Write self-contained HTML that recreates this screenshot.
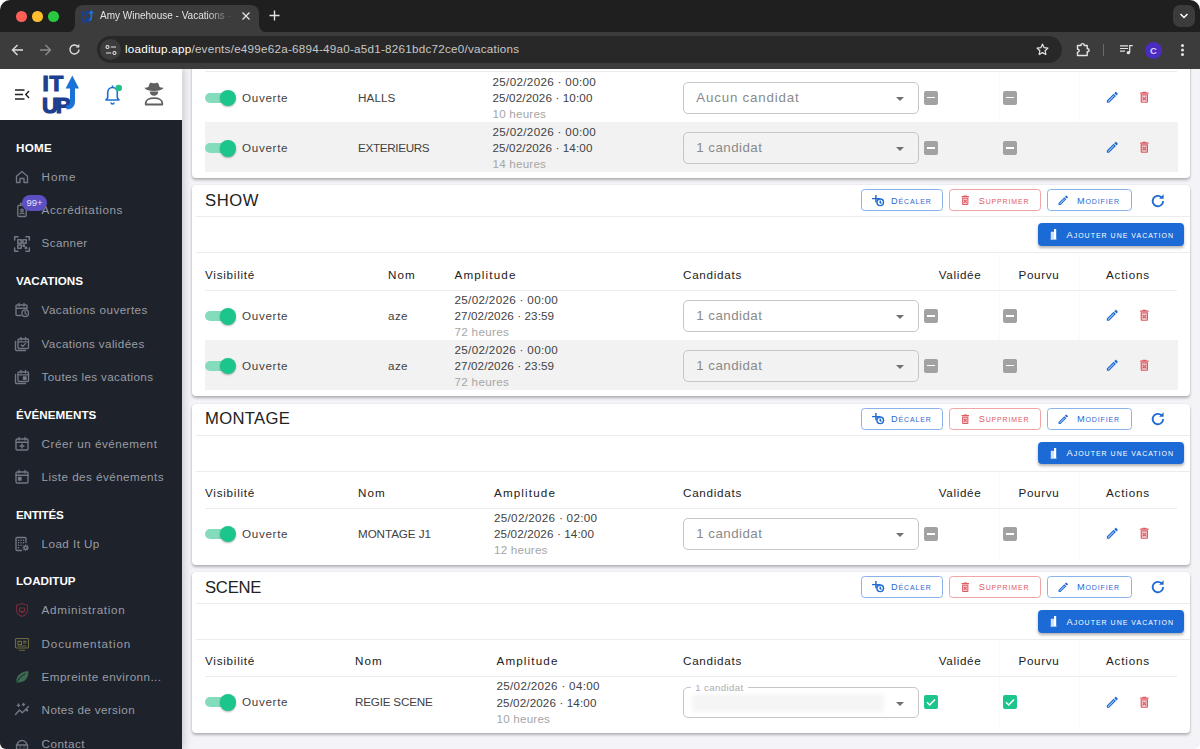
<!DOCTYPE html>
<html lang="fr">
<head>
<meta charset="utf-8">
<title>Amy Winehouse - Vacations</title>
<style>
*{box-sizing:border-box;margin:0;padding:0}
html,body{width:1200px;height:749px;overflow:hidden;background:#fff}
body{font-family:"Liberation Sans",sans-serif;position:relative;color:#333}
.abs{position:absolute}
#win{position:absolute;left:0;top:0;width:1200px;height:749px;border-radius:10px 10px 6px 6px;overflow:hidden;background:#f3f3f8}
/* ---------- browser chrome ---------- */
#tabbar{position:absolute;left:0;top:0;width:1200px;height:33px;background:#1f1f1f}
#toolbar{position:absolute;left:0;top:32px;width:1200px;height:36.50px;background:#3c3c3c}
.tl{position:absolute;top:11px;width:10.50px;height:10.50px;border-radius:50%}
#tab{position:absolute;left:75px;top:5px;width:184px;height:28px;background:#3c3c3c;border-radius:8px 8px 0 0}
#tab:before,#tab:after{content:"";position:absolute;bottom:0;width:8px;height:8px;background:radial-gradient(circle at 0 0,transparent 7.5px,#3c3c3c 8px)}
#tab:before{left:-8px}
#tab:after{right:-8px;background:radial-gradient(circle at 100% 0,transparent 7.5px,#3c3c3c 8px)}
#tabtitle{position:absolute;left:25px;top:4px;font-size:10px;line-height:14px;color:#e3e3e3;white-space:nowrap;width:133px;overflow:hidden;
 -webkit-mask-image:linear-gradient(90deg,#000 80%,transparent 100%);mask-image:linear-gradient(90deg,#000 80%,transparent 100%)}
#urlpill{position:absolute;left:97px;top:4px;width:965px;height:27px;border-radius:14px;background:#282828}
#urlicon{position:absolute;left:3px;top:3px;width:21px;height:21px;border-radius:50%;background:#3c3c3c}
#url{position:absolute;left:28px;top:6px;font-size:11.67px;line-height:14px;color:#c7c7c7;white-space:nowrap;letter-spacing:.24px}
#url b{font-weight:normal;color:#fff}
/* ---------- sidebar ---------- */
#side{position:absolute;left:0;top:68px;width:182px;height:681px;background:#1e222b;box-shadow:2px 0 8px rgba(0,0,0,.18)}
#sidehead{position:absolute;left:0;top:0;width:182px;height:52px;background:#fff}
.sh{position:absolute;left:16px;font-size:11.67px;font-weight:bold;color:#fff;white-space:nowrap;line-height:16px}
.si{position:absolute;left:41.6px;font-size:11.67px;color:#999da5;white-space:nowrap;line-height:16px;letter-spacing:.5px}
.logo{font-size:22.50px;font-weight:bold;color:#1d3f8f;line-height:24px;-webkit-text-stroke:1.20px #1d3f8f}
.ic{position:absolute;left:14px;width:16px;height:16px}
/* ---------- main ---------- */
.card{position:absolute;left:192px;width:998px;background:#fff;border-radius:4px;box-shadow:0 2px 3px rgba(0,0,0,.27),0 0 1.50px rgba(0,0,0,.1)}
.ctitle{position:absolute;left:13px;top:7px;font-size:16.67px;color:#222;line-height:18px;white-space:nowrap;letter-spacing:.3px}
.hl{position:absolute;height:1px;background:#ececec}

.t{font-size:11.67px;line-height:16px;color:#424242;white-space:nowrap;letter-spacing:.15px}
.t.ouv{letter-spacing:.68px}
.t.d{letter-spacing:.34px}
.t.dur{color:#a6a6a6;letter-spacing:.5px}
.t.th{color:#222;letter-spacing:.8px}
.knob{width:16.50px;height:16.50px;border-radius:50%;background:#1bc58b;box-shadow:0 1px 2px rgba(0,0,0,.3)}
.cb{width:14px;height:14px;border-radius:2px;background:#a2a2a2}
.cb i{position:absolute;left:3px;top:6.10px;width:8px;height:1.80px;background:#fff}
.sel{width:235.50px;height:31.50px;border:1px solid #c6c6c6;border-radius:5px}
.sel .sv{position:absolute;left:12px;top:6.80px;font-size:13.33px;line-height:16px;color:#8a8a8a;letter-spacing:.45px;white-space:nowrap}
.sel .fl{position:absolute;left:7px;top:-5.70px;padding:0 4px;font-size:9.70px;line-height:12px;color:#adadad;letter-spacing:.35px;white-space:nowrap}
.sel .blur{position:absolute;left:8px;top:6px;width:192px;height:18px;background:#f5f5f5;filter:blur(2px);border-radius:3px}
.caret{position:absolute;right:13.70px;top:14px;border-left:4px solid transparent;border-right:4px solid transparent;border-top:4.50px solid #707070}
.btn{height:22px;border:1px solid;border-radius:3.50px;font-size:9.20px;white-space:nowrap}
.btn span{position:absolute;top:3.50px;line-height:14px;letter-spacing:.85px}
.btn small{font-size:7px;letter-spacing:.85px}
.btn.add span,.btn.add small{letter-spacing:1px}
.btn.add{background:#1b6ad6;border-color:#1b6ad6;color:#fff;box-shadow:0 2px 3px rgba(0,0,0,.3)}
</style>
</head>
<body>
<div id="win">

<!-- main content -->
<div id="main">
<div class="card" style="top:20px;height:157.80px"></div>
<div class="hl" style="left:205px;top:70.50px;width:972px;background:#ececec"></div>
<div class="abs" style="left:999px;top:68px;width:1px;height:103.5px;background:rgba(0,0,0,.018)"></div><div class="abs" style="left:1079px;top:68px;width:1px;height:103.5px;background:rgba(0,0,0,.018)"></div>
<div class="abs" style="left:205px;top:92.7px;width:25px;height:10px;border-radius:5px;background:#84dcbc"></div><div class="abs knob" style="left:219.5px;top:89.7px"></div>
<div class="abs t ouv" style="left:242px;top:89.5px;">Ouverte</div>
<div class="abs t" style="left:358px;top:89.5px;letter-spacing:0.1px">HALLS</div>
<div class="abs t d" style="left:492.5px;top:73.8px;letter-spacing:0.32px">25/02/2026 · 00:00</div>
<div class="abs t d" style="left:492.5px;top:89.9px;letter-spacing:0.12px">25/02/2026 · 10:00</div>
<div class="abs t dur" style="left:492.5px;top:105.9px;letter-spacing:0.2px">10 heures</div>
<div class="abs sel" style="left:683.3px;top:82.0px;background:#fff"><span class="sv" style="letter-spacing:0.8px">Aucun candidat</span><i class="caret"></i></div>
<div class="abs cb" style="left:924px;top:90.5px"><i></i></div>
<div class="abs cb" style="left:1003px;top:90.5px"><i></i></div>
<svg class="abs" style="left:1104.85px;top:90.15px" width="14.7" height="14.7" viewBox="0 0 24 24" fill="#1f6bd3"><path opacity=".38" d="M5 18.080V19h.920l9.060-9.060-.920-.920z"/><path d="M20.710 7.040c.390-.390.390-1.020 0-1.410l-2.340-2.340c-.2-.2-.450-.290-.710-.290s-.510.100-.700.290l-1.830 1.830 3.750 3.750 1.830-1.830zM3 17.250V21h3.750L17.810 9.940l-3.750-3.750L3 17.250zM5.920 19H5v-.920l9.060-9.060.920.920L5.920 19z"/></svg>
<svg class="abs" style="left:1136.95px;top:90.15px" width="14.7" height="14.7" viewBox="0 0 24 24" fill="#dd5a62"><path opacity=".32" d="M16 9H8v10h8V9zm-.470 7.120l-1.410 1.410L12 15.410l-2.120 2.120-1.410-1.410L10.590 14l-2.130-2.120 1.410-1.410L12 12.590l2.120-2.120 1.410 1.410L13.410 14l2.120 2.120z"/><path d="M14.120 10.470L12 12.590l-2.130-2.120-1.410 1.410L10.590 14l-2.120 2.120 1.410 1.410L12 15.410l2.120 2.120 1.410-1.410L13.410 14l2.120-2.120zM15.500 4l-1-1h-5l-1 1H5v2h14V4zM6 19c0 1.100.9 2 2 2h8c1.100 0 2-.9 2-2V7H6v12zM8 9h8v10H8V9z"/></svg>
<div class="abs" style="left:205px;top:121.7px;width:972.50px;height:50.3px;background:#f2f2f2"></div>
<div class="abs" style="left:205px;top:143.0px;width:25px;height:10px;border-radius:5px;background:#84dcbc"></div><div class="abs knob" style="left:219.5px;top:140.0px"></div>
<div class="abs t ouv" style="left:242px;top:139.8px;">Ouverte</div>
<div class="abs t" style="left:358px;top:139.8px;letter-spacing:-0.32px">EXTERIEURS</div>
<div class="abs t d" style="left:492.5px;top:124.10px;letter-spacing:0.32px">25/02/2026 · 00:00</div>
<div class="abs t d" style="left:492.5px;top:140.20px;letter-spacing:0.12px">25/02/2026 · 14:00</div>
<div class="abs t dur" style="left:492.5px;top:156.20px;letter-spacing:0.2px">14 heures</div>
<div class="abs sel" style="left:683.3px;top:132.3px;background:#f2f2f2"><span class="sv" style="letter-spacing:0.45px">1 candidat</span><i class="caret"></i></div>
<div class="abs cb" style="left:924px;top:140.8px"><i></i></div>
<div class="abs cb" style="left:1003px;top:140.8px"><i></i></div>
<svg class="abs" style="left:1104.85px;top:140.45px" width="14.7" height="14.7" viewBox="0 0 24 24" fill="#1f6bd3"><path opacity=".38" d="M5 18.080V19h.920l9.060-9.060-.920-.920z"/><path d="M20.710 7.040c.390-.390.390-1.020 0-1.410l-2.340-2.340c-.2-.2-.450-.290-.710-.290s-.510.100-.700.290l-1.830 1.830 3.750 3.750 1.830-1.830zM3 17.250V21h3.750L17.810 9.940l-3.750-3.750L3 17.250zM5.920 19H5v-.920l9.060-9.060.920.920L5.920 19z"/></svg>
<svg class="abs" style="left:1136.95px;top:140.45px" width="14.7" height="14.7" viewBox="0 0 24 24" fill="#dd5a62"><path opacity=".32" d="M16 9H8v10h8V9zm-.470 7.120l-1.410 1.410L12 15.410l-2.120 2.120-1.410-1.410L10.590 14l-2.130-2.120 1.410-1.410L12 12.590l2.120-2.120 1.410 1.410L13.410 14l2.120 2.120z"/><path d="M14.120 10.470L12 12.590l-2.130-2.120-1.410 1.410L10.590 14l-2.120 2.120 1.410 1.410L12 15.410l2.120 2.120 1.410-1.410L13.410 14l2.120-2.120zM15.500 4l-1-1h-5l-1 1H5v2h14V4zM6 19c0 1.100.9 2 2 2h8c1.100 0 2-.9 2-2V7H6v12zM8 9h8v10H8V9z"/></svg>
<div class="card" style="top:185px;height:211px"></div>
<div class="abs ctitle" style="left:205px;top:191.9px;letter-spacing:0.55px">SHOW</div>
<div class="hl" style="left:196px;top:216.3px;width:994px"></div>
<div class="abs btn" style="left:861px;top:189.3px;width:81.50px;color:#1f6bd3;border-color:#8ab3ea"><svg class="abs" style="left:10.10px;top:4.30px" width="13" height="12.100" viewBox="0 0 15 14" fill="none" stroke="#1f6bd3" stroke-width="1.700"><circle cx="9.500" cy="8.500" r="3.800"/><path d="M9.500 6.500v2.200l1.500.9M0 4.200h9M4.500 0v8.500"/></svg><span style="left:29px">D<small>ÉCALER</small></span></div>
<div class="abs btn" style="left:949px;top:189.3px;width:91.50px;color:#dd5a62;border-color:#eda5a5"><svg class="abs" style="left:9.25px;top:3.75px" width="12.5" height="12.5" viewBox="0 0 24 24" fill="#dd5a62"><path opacity=".32" d="M16 9H8v10h8V9zm-.470 7.120l-1.410 1.410L12 15.410l-2.120 2.120-1.410-1.410L10.590 14l-2.130-2.120 1.410-1.410L12 12.590l2.120-2.120 1.410 1.410L13.410 14l2.120 2.120z"/><path d="M14.120 10.470L12 12.590l-2.130-2.120-1.410 1.410L10.590 14l-2.120 2.120 1.410 1.410L12 15.410l2.120 2.120 1.410-1.410L13.410 14l2.120-2.120zM15.500 4l-1-1h-5l-1 1H5v2h14V4zM6 19c0 1.100.9 2 2 2h8c1.100 0 2-.9 2-2V7H6v12zM8 9h8v10H8V9z"/></svg><span style="left:28.70px">S<small>UPPRIMER</small></span></div>
<div class="abs btn" style="left:1047px;top:189.3px;width:84.50px;color:#1f6bd3;border-color:#8ab3ea"><svg class="abs" style="left:9.25px;top:3.75px" width="12.5" height="12.5" viewBox="0 0 24 24" fill="#1f6bd3"><path opacity=".38" d="M5 18.080V19h.920l9.060-9.060-.920-.920z"/><path d="M20.710 7.040c.390-.390.390-1.020 0-1.410l-2.340-2.340c-.2-.2-.450-.290-.710-.290s-.510.100-.700.290l-1.830 1.830 3.750 3.750 1.830-1.830zM3 17.250V21h3.750L17.810 9.940l-3.750-3.750L3 17.250zM5.920 19H5v-.920l9.060-9.060.920.920L5.920 19z"/></svg><span style="left:29px">M<small>ODIFIER</small></span></div>
<svg class="abs" style="left:1149.5px;top:192.5px" width="16" height="16" viewBox="0 0 15 15"><path d="M12.300 7.500A4.900 4.900 0 1 1 10.800 4" stroke="#1f6bd3" stroke-width="1.700" fill="none"/><path d="M12.800 1.200v4.300H8.500z" fill="#1f6bd3"/></svg>
<div class="abs btn add" style="left:1037.50px;top:223.4px;width:146.50px;height:22.60px"><svg class="abs" style="left:11.0px;top:4.70px" width="7" height="11" viewBox="0 0 7 11"><path d="M4 0h2.200v10H4z" fill="#fff"/><path d="M.8 2.800H4V10H.8z" fill="#cfe0f7"/><path d="M.5 10.300h6" stroke="#e8f0fb" stroke-width=".8"/></svg><span style="left:28px">A<small>JOUTER UNE VACATION</small></span></div>
<div class="hl" style="left:196px;top:252.2px;width:994px"></div>
<div class="abs" style="left:999px;top:253px;width:1px;height:136.80px;background:rgba(0,0,0,.018)"></div><div class="abs" style="left:1079px;top:253px;width:1px;height:136.80px;background:rgba(0,0,0,.018)"></div>
<div class="abs t th" style="left:205px;top:266.6px;letter-spacing:0.75px">Visibilité</div>
<div class="abs t th" style="left:388px;top:266.6px;letter-spacing:1.1px">Nom</div>
<div class="abs t th" style="left:454.5px;top:266.6px;letter-spacing:1.13px">Amplitude</div>
<div class="abs t th" style="left:683px;top:266.6px;letter-spacing:0.72px">Candidats</div>
<div class="abs t th" style="left:920px;top:266.6px;width:80px;text-align:center;letter-spacing:0.64px">Validée</div>
<div class="abs t th" style="left:999px;top:266.6px;width:80px;text-align:center;letter-spacing:0.68px">Pourvu</div>
<div class="abs t th" style="left:1088px;top:266.6px;width:80px;text-align:center;letter-spacing:0.82px">Actions</div>
<div class="hl" style="left:205px;top:290px;width:972px"></div>
<div class="abs" style="left:205px;top:311.0px;width:25px;height:10px;border-radius:5px;background:#84dcbc"></div><div class="abs knob" style="left:219.5px;top:308.0px"></div>
<div class="abs t ouv" style="left:242px;top:307.8px;">Ouverte</div>
<div class="abs t" style="left:388px;top:307.8px;letter-spacing:0.4px">aze</div>
<div class="abs t d" style="left:454.5px;top:292.1px;letter-spacing:0.32px">25/02/2026 · 00:00</div>
<div class="abs t d" style="left:454.5px;top:308.2px;letter-spacing:0.1px">27/02/2026 · 23:59</div>
<div class="abs t dur" style="left:454.5px;top:324.2px;letter-spacing:0.3px">72 heures</div>
<div class="abs sel" style="left:683.3px;top:300.3px;background:#fff"><span class="sv" style="letter-spacing:0.45px">1 candidat</span><i class="caret"></i></div>
<div class="abs cb" style="left:924px;top:308.8px"><i></i></div>
<div class="abs cb" style="left:1003px;top:308.8px"><i></i></div>
<svg class="abs" style="left:1104.85px;top:308.45px" width="14.7" height="14.7" viewBox="0 0 24 24" fill="#1f6bd3"><path opacity=".38" d="M5 18.080V19h.920l9.060-9.060-.920-.920z"/><path d="M20.710 7.040c.390-.390.390-1.020 0-1.410l-2.340-2.340c-.2-.2-.450-.290-.710-.290s-.510.100-.700.290l-1.830 1.830 3.750 3.750 1.830-1.830zM3 17.250V21h3.750L17.810 9.940l-3.750-3.750L3 17.250zM5.920 19H5v-.920l9.060-9.060.920.920L5.920 19z"/></svg>
<svg class="abs" style="left:1136.95px;top:308.45px" width="14.7" height="14.7" viewBox="0 0 24 24" fill="#dd5a62"><path opacity=".32" d="M16 9H8v10h8V9zm-.470 7.120l-1.410 1.410L12 15.410l-2.120 2.120-1.410-1.410L10.590 14l-2.130-2.120 1.410-1.410L12 12.590l2.120-2.120 1.410 1.410L13.410 14l2.120 2.120z"/><path d="M14.120 10.470L12 12.590l-2.130-2.120-1.410 1.410L10.590 14l-2.120 2.120 1.410 1.410L12 15.410l2.120 2.120 1.410-1.410L13.410 14l2.120-2.120zM15.500 4l-1-1h-5l-1 1H5v2h14V4zM6 19c0 1.100.9 2 2 2h8c1.100 0 2-.9 2-2V7H6v12zM8 9h8v10H8V9z"/></svg>
<div class="abs" style="left:205px;top:340.0px;width:972.50px;height:49.8px;background:#f2f2f2"></div>
<div class="abs" style="left:205px;top:360.8px;width:25px;height:10px;border-radius:5px;background:#84dcbc"></div><div class="abs knob" style="left:219.5px;top:357.8px"></div>
<div class="abs t ouv" style="left:242px;top:357.6px;">Ouverte</div>
<div class="abs t" style="left:388px;top:357.6px;letter-spacing:0.4px">aze</div>
<div class="abs t d" style="left:454.5px;top:341.90px;letter-spacing:0.32px">25/02/2026 · 00:00</div>
<div class="abs t d" style="left:454.5px;top:358.0px;letter-spacing:0.1px">27/02/2026 · 23:59</div>
<div class="abs t dur" style="left:454.5px;top:374.0px;letter-spacing:0.3px">72 heures</div>
<div class="abs sel" style="left:683.3px;top:350.1px;background:#f2f2f2"><span class="sv" style="letter-spacing:0.45px">1 candidat</span><i class="caret"></i></div>
<div class="abs cb" style="left:924px;top:358.6px"><i></i></div>
<div class="abs cb" style="left:1003px;top:358.6px"><i></i></div>
<svg class="abs" style="left:1104.85px;top:358.25px" width="14.7" height="14.7" viewBox="0 0 24 24" fill="#1f6bd3"><path opacity=".38" d="M5 18.080V19h.920l9.060-9.060-.920-.920z"/><path d="M20.710 7.040c.390-.390.390-1.020 0-1.410l-2.340-2.340c-.2-.2-.450-.290-.710-.290s-.510.100-.700.290l-1.830 1.830 3.750 3.750 1.830-1.830zM3 17.250V21h3.750L17.810 9.940l-3.750-3.750L3 17.250zM5.920 19H5v-.920l9.060-9.060.920.920L5.920 19z"/></svg>
<svg class="abs" style="left:1136.95px;top:358.25px" width="14.7" height="14.7" viewBox="0 0 24 24" fill="#dd5a62"><path opacity=".32" d="M16 9H8v10h8V9zm-.470 7.120l-1.410 1.410L12 15.410l-2.120 2.120-1.410-1.410L10.590 14l-2.130-2.120 1.410-1.410L12 12.590l2.120-2.120 1.410 1.410L13.410 14l2.120 2.120z"/><path d="M14.120 10.470L12 12.590l-2.130-2.120-1.410 1.410L10.590 14l-2.120 2.120 1.410 1.410L12 15.410l2.120 2.120 1.410-1.410L13.410 14l2.120-2.120zM15.500 4l-1-1h-5l-1 1H5v2h14V4zM6 19c0 1.100.9 2 2 2h8c1.100 0 2-.9 2-2V7H6v12zM8 9h8v10H8V9z"/></svg>
<div class="card" style="top:403.5px;height:161.2px"></div>
<div class="abs ctitle" style="left:205px;top:410.4px;letter-spacing:0.3px">MONTAGE</div>
<div class="hl" style="left:196px;top:434.8px;width:994px"></div>
<div class="abs btn" style="left:861px;top:407.8px;width:81.50px;color:#1f6bd3;border-color:#8ab3ea"><svg class="abs" style="left:10.10px;top:4.30px" width="13" height="12.100" viewBox="0 0 15 14" fill="none" stroke="#1f6bd3" stroke-width="1.700"><circle cx="9.500" cy="8.500" r="3.800"/><path d="M9.500 6.500v2.200l1.500.9M0 4.200h9M4.500 0v8.500"/></svg><span style="left:29px">D<small>ÉCALER</small></span></div>
<div class="abs btn" style="left:949px;top:407.8px;width:91.50px;color:#dd5a62;border-color:#eda5a5"><svg class="abs" style="left:9.25px;top:3.75px" width="12.5" height="12.5" viewBox="0 0 24 24" fill="#dd5a62"><path opacity=".32" d="M16 9H8v10h8V9zm-.470 7.120l-1.410 1.410L12 15.410l-2.120 2.120-1.410-1.410L10.590 14l-2.130-2.120 1.410-1.410L12 12.590l2.120-2.120 1.410 1.410L13.410 14l2.120 2.120z"/><path d="M14.120 10.470L12 12.590l-2.130-2.120-1.410 1.410L10.590 14l-2.120 2.120 1.410 1.410L12 15.410l2.120 2.120 1.410-1.410L13.410 14l2.120-2.120zM15.500 4l-1-1h-5l-1 1H5v2h14V4zM6 19c0 1.100.9 2 2 2h8c1.100 0 2-.9 2-2V7H6v12zM8 9h8v10H8V9z"/></svg><span style="left:28.70px">S<small>UPPRIMER</small></span></div>
<div class="abs btn" style="left:1047px;top:407.8px;width:84.50px;color:#1f6bd3;border-color:#8ab3ea"><svg class="abs" style="left:9.25px;top:3.75px" width="12.5" height="12.5" viewBox="0 0 24 24" fill="#1f6bd3"><path opacity=".38" d="M5 18.080V19h.920l9.060-9.060-.920-.920z"/><path d="M20.710 7.040c.390-.390.390-1.020 0-1.410l-2.340-2.340c-.2-.2-.450-.290-.710-.290s-.510.100-.700.290l-1.830 1.830 3.750 3.750 1.830-1.830zM3 17.250V21h3.750L17.810 9.940l-3.750-3.750L3 17.250zM5.920 19H5v-.920l9.060-9.060.920.920L5.920 19z"/></svg><span style="left:29px">M<small>ODIFIER</small></span></div>
<svg class="abs" style="left:1149.5px;top:411.0px" width="16" height="16" viewBox="0 0 15 15"><path d="M12.300 7.500A4.900 4.900 0 1 1 10.800 4" stroke="#1f6bd3" stroke-width="1.700" fill="none"/><path d="M12.800 1.200v4.300H8.500z" fill="#1f6bd3"/></svg>
<div class="abs btn add" style="left:1037.50px;top:441.9px;width:146.50px;height:22.60px"><svg class="abs" style="left:11.0px;top:4.70px" width="7" height="11" viewBox="0 0 7 11"><path d="M4 0h2.200v10H4z" fill="#fff"/><path d="M.8 2.800H4V10H.8z" fill="#cfe0f7"/><path d="M.5 10.300h6" stroke="#e8f0fb" stroke-width=".8"/></svg><span style="left:28px">A<small>JOUTER UNE VACATION</small></span></div>
<div class="hl" style="left:196px;top:470.7px;width:994px"></div>
<div class="abs" style="left:999px;top:471.5px;width:1px;height:87.0px;background:rgba(0,0,0,.018)"></div><div class="abs" style="left:1079px;top:471.5px;width:1px;height:87.0px;background:rgba(0,0,0,.018)"></div>
<div class="abs t th" style="left:205px;top:484.5px;letter-spacing:0.75px">Visibilité</div>
<div class="abs t th" style="left:358px;top:484.5px;letter-spacing:1.1px">Nom</div>
<div class="abs t th" style="left:494px;top:484.5px;letter-spacing:1.13px">Amplitude</div>
<div class="abs t th" style="left:683px;top:484.5px;letter-spacing:0.72px">Candidats</div>
<div class="abs t th" style="left:920px;top:484.5px;width:80px;text-align:center;letter-spacing:0.64px">Validée</div>
<div class="abs t th" style="left:999px;top:484.5px;width:80px;text-align:center;letter-spacing:0.68px">Pourvu</div>
<div class="abs t th" style="left:1088px;top:484.5px;width:80px;text-align:center;letter-spacing:0.82px">Actions</div>
<div class="hl" style="left:205px;top:507.9px;width:972px"></div>
<div class="abs" style="left:205px;top:528.9px;width:25px;height:10px;border-radius:5px;background:#84dcbc"></div><div class="abs knob" style="left:219.5px;top:525.9px"></div>
<div class="abs t ouv" style="left:242px;top:525.70px;">Ouverte</div>
<div class="abs t" style="left:358px;top:525.70px;letter-spacing:-0.08px">MONTAGE J1</div>
<div class="abs t d" style="left:494px;top:510.00px;letter-spacing:0.3px">25/02/2026 · 02:00</div>
<div class="abs t d" style="left:494px;top:526.10px;letter-spacing:0.12px">25/02/2026 · 14:00</div>
<div class="abs t dur" style="left:494px;top:542.10px;letter-spacing:0.2px">12 heures</div>
<div class="abs sel" style="left:683.3px;top:518.20px;background:#fff"><span class="sv" style="letter-spacing:0.45px">1 candidat</span><i class="caret"></i></div>
<div class="abs cb" style="left:924px;top:526.70px"><i></i></div>
<div class="abs cb" style="left:1003px;top:526.70px"><i></i></div>
<svg class="abs" style="left:1104.85px;top:526.35px" width="14.7" height="14.7" viewBox="0 0 24 24" fill="#1f6bd3"><path opacity=".38" d="M5 18.080V19h.920l9.060-9.060-.920-.920z"/><path d="M20.710 7.040c.390-.390.390-1.020 0-1.410l-2.340-2.340c-.2-.2-.450-.290-.710-.290s-.510.100-.700.290l-1.830 1.830 3.750 3.750 1.830-1.830zM3 17.250V21h3.750L17.810 9.940l-3.750-3.750L3 17.250zM5.920 19H5v-.920l9.060-9.060.920.920L5.920 19z"/></svg>
<svg class="abs" style="left:1136.95px;top:526.35px" width="14.7" height="14.7" viewBox="0 0 24 24" fill="#dd5a62"><path opacity=".32" d="M16 9H8v10h8V9zm-.470 7.120l-1.410 1.410L12 15.410l-2.120 2.120-1.410-1.410L10.590 14l-2.130-2.120 1.410-1.410L12 12.590l2.120-2.120 1.410 1.410L13.410 14l2.120 2.120z"/><path d="M14.120 10.470L12 12.590l-2.130-2.120-1.410 1.410L10.590 14l-2.120 2.120 1.410 1.410L12 15.410l2.120 2.120 1.410-1.410L13.410 14l2.120-2.120zM15.500 4l-1-1h-5l-1 1H5v2h14V4zM6 19c0 1.100.9 2 2 2h8c1.100 0 2-.9 2-2V7H6v12zM8 9h8v10H8V9z"/></svg>
<div class="card" style="top:571.6px;height:161.2px"></div>
<div class="abs ctitle" style="left:205px;top:578.5px;letter-spacing:-0.25px">SCENE</div>
<div class="hl" style="left:196px;top:602.9px;width:994px"></div>
<div class="abs btn" style="left:861px;top:575.9px;width:81.50px;color:#1f6bd3;border-color:#8ab3ea"><svg class="abs" style="left:10.10px;top:4.30px" width="13" height="12.100" viewBox="0 0 15 14" fill="none" stroke="#1f6bd3" stroke-width="1.700"><circle cx="9.500" cy="8.500" r="3.800"/><path d="M9.500 6.500v2.200l1.500.9M0 4.200h9M4.500 0v8.500"/></svg><span style="left:29px">D<small>ÉCALER</small></span></div>
<div class="abs btn" style="left:949px;top:575.9px;width:91.50px;color:#dd5a62;border-color:#eda5a5"><svg class="abs" style="left:9.25px;top:3.75px" width="12.5" height="12.5" viewBox="0 0 24 24" fill="#dd5a62"><path opacity=".32" d="M16 9H8v10h8V9zm-.470 7.120l-1.410 1.410L12 15.410l-2.120 2.120-1.410-1.410L10.590 14l-2.130-2.120 1.410-1.410L12 12.590l2.120-2.120 1.410 1.410L13.410 14l2.120 2.120z"/><path d="M14.120 10.470L12 12.590l-2.130-2.120-1.410 1.410L10.590 14l-2.120 2.120 1.410 1.410L12 15.410l2.120 2.120 1.410-1.410L13.410 14l2.120-2.120zM15.500 4l-1-1h-5l-1 1H5v2h14V4zM6 19c0 1.100.9 2 2 2h8c1.100 0 2-.9 2-2V7H6v12zM8 9h8v10H8V9z"/></svg><span style="left:28.70px">S<small>UPPRIMER</small></span></div>
<div class="abs btn" style="left:1047px;top:575.9px;width:84.50px;color:#1f6bd3;border-color:#8ab3ea"><svg class="abs" style="left:9.25px;top:3.75px" width="12.5" height="12.5" viewBox="0 0 24 24" fill="#1f6bd3"><path opacity=".38" d="M5 18.080V19h.920l9.060-9.060-.920-.920z"/><path d="M20.710 7.040c.390-.390.390-1.020 0-1.410l-2.340-2.340c-.2-.2-.450-.290-.710-.290s-.510.100-.700.290l-1.830 1.830 3.750 3.750 1.830-1.830zM3 17.250V21h3.750L17.810 9.940l-3.750-3.750L3 17.250zM5.920 19H5v-.920l9.060-9.060.920.920L5.920 19z"/></svg><span style="left:29px">M<small>ODIFIER</small></span></div>
<svg class="abs" style="left:1149.5px;top:579.1px" width="16" height="16" viewBox="0 0 15 15"><path d="M12.300 7.500A4.900 4.900 0 1 1 10.800 4" stroke="#1f6bd3" stroke-width="1.700" fill="none"/><path d="M12.800 1.200v4.300H8.500z" fill="#1f6bd3"/></svg>
<div class="abs btn add" style="left:1037.50px;top:610.0px;width:146.50px;height:22.60px"><svg class="abs" style="left:11.0px;top:4.70px" width="7" height="11" viewBox="0 0 7 11"><path d="M4 0h2.200v10H4z" fill="#fff"/><path d="M.8 2.800H4V10H.8z" fill="#cfe0f7"/><path d="M.5 10.300h6" stroke="#e8f0fb" stroke-width=".8"/></svg><span style="left:28px">A<small>JOUTER UNE VACATION</small></span></div>
<div class="hl" style="left:196px;top:638.80px;width:994px"></div>
<div class="abs" style="left:999px;top:639.6px;width:1px;height:87.0px;background:rgba(0,0,0,.018)"></div><div class="abs" style="left:1079px;top:639.6px;width:1px;height:87.0px;background:rgba(0,0,0,.018)"></div>
<div class="abs t th" style="left:205px;top:652.90px;letter-spacing:0.75px">Visibilité</div>
<div class="abs t th" style="left:355px;top:652.90px;letter-spacing:1.1px">Nom</div>
<div class="abs t th" style="left:496.5px;top:652.90px;letter-spacing:1.13px">Amplitude</div>
<div class="abs t th" style="left:683px;top:652.90px;letter-spacing:0.72px">Candidats</div>
<div class="abs t th" style="left:920px;top:652.90px;width:80px;text-align:center;letter-spacing:0.64px">Validée</div>
<div class="abs t th" style="left:999px;top:652.90px;width:80px;text-align:center;letter-spacing:0.68px">Pourvu</div>
<div class="abs t th" style="left:1088px;top:652.90px;width:80px;text-align:center;letter-spacing:0.82px">Actions</div>
<div class="hl" style="left:205px;top:676.30px;width:972px"></div>
<div class="abs" style="left:205px;top:697.30px;width:25px;height:10px;border-radius:5px;background:#84dcbc"></div><div class="abs knob" style="left:219.5px;top:694.30px"></div>
<div class="abs t ouv" style="left:242px;top:694.10px;">Ouverte</div>
<div class="abs t" style="left:355px;top:694.10px;letter-spacing:-0.19px">REGIE SCENE</div>
<div class="abs t d" style="left:496.5px;top:678.40px;letter-spacing:0.3px">25/02/2026 · 04:00</div>
<div class="abs t d" style="left:496.5px;top:694.50px;letter-spacing:0.12px">25/02/2026 · 14:00</div>
<div class="abs t dur" style="left:496.5px;top:710.50px;letter-spacing:0.2px">10 heures</div>
<div class="abs sel" style="left:683.3px;top:686.60px;background:#fff"><span class="fl" style="background:#fff">1 candidat</span><span class="blur"></span><i class="caret"></i></div>
<svg class="abs" style="left:924px;top:695.10px" width="14" height="14" viewBox="0 0 14 14"><rect width="14" height="14" rx="2" fill="#1dc58b"/><path d="M3 7.300l2.700 2.700L11 4.400" stroke="#fff" stroke-width="1.500" fill="none"/></svg>
<svg class="abs" style="left:1003px;top:695.10px" width="14" height="14" viewBox="0 0 14 14"><rect width="14" height="14" rx="2" fill="#1dc58b"/><path d="M3 7.300l2.700 2.700L11 4.400" stroke="#fff" stroke-width="1.500" fill="none"/></svg>
<svg class="abs" style="left:1104.85px;top:694.75px" width="14.7" height="14.7" viewBox="0 0 24 24" fill="#1f6bd3"><path opacity=".38" d="M5 18.080V19h.920l9.060-9.060-.920-.920z"/><path d="M20.710 7.040c.390-.390.390-1.020 0-1.410l-2.340-2.340c-.2-.2-.450-.290-.710-.290s-.510.100-.700.290l-1.830 1.830 3.750 3.750 1.830-1.830zM3 17.250V21h3.750L17.810 9.940l-3.750-3.750L3 17.250zM5.920 19H5v-.920l9.060-9.060.920.920L5.920 19z"/></svg>
<svg class="abs" style="left:1136.95px;top:694.75px" width="14.7" height="14.7" viewBox="0 0 24 24" fill="#dd5a62"><path opacity=".32" d="M16 9H8v10h8V9zm-.470 7.120l-1.410 1.410L12 15.410l-2.120 2.120-1.410-1.410L10.590 14l-2.130-2.120 1.410-1.410L12 12.590l2.120-2.120 1.410 1.410L13.410 14l2.120 2.120z"/><path d="M14.120 10.470L12 12.590l-2.130-2.120-1.410 1.410L10.590 14l-2.120 2.120 1.410 1.410L12 15.410l2.120 2.120 1.410-1.410L13.410 14l2.120-2.120zM15.500 4l-1-1h-5l-1 1H5v2h14V4zM6 19c0 1.100.9 2 2 2h8c1.100 0 2-.9 2-2V7H6v12zM8 9h8v10H8V9z"/></svg>
</div>

<!-- sidebar -->
<div id="side">
 <div id="sidehead">
  <svg class="abs" style="left:15px;top:21px" width="15" height="11" viewBox="0 0 15 11" fill="none" stroke="#222" stroke-width="1.400"><path d="M0 1h9.500M0 5.500h8M0 10h9.500M14 2l-3.200 3.500L14 9"/></svg>
  <div class="abs logo" style="left:42.50px;top:4px;letter-spacing:.8px">IT</div>
  <div class="abs logo" style="left:42px;top:26px;letter-spacing:-2.50px">UP</div>
  <svg class="abs" style="left:60px;top:6px" width="22" height="38" viewBox="0 0 22 38"><path d="M12.300 1.500L19 14.500h-4v12.500c0 5.500-3 8.500-8.500 8.500v-4c2.500-.3 3.500-1.800 3.500-4.500V14.500H5.600z" fill="#1a73d8"/></svg>
  <svg class="abs" style="left:104px;top:16px" width="18" height="22" viewBox="0 0 18 22" fill="none" stroke="#1a6fd6" stroke-width="1.600" stroke-linejoin="round"><path d="M8.500 3.500c-3 0-4.800 2.300-4.800 5.300v5L2 16h13l-1.700-2.200v-5c0-3-1.800-5.300-4.800-5.300zM8.500 1.500v2M7 18.500a1.500 1.500 0 0 0 3 0"/><circle cx="14.700" cy="4" r="3.300" fill="#22c08a" stroke="none"/></svg>
  <svg class="abs" style="left:143px;top:13px" width="22" height="26" viewBox="0 0 22 26"><path d="M1.300 6.800c1.800.2 3.200-.2 4.300-1C6 3 7 1.200 8.500 1.800c1.700.7 3.300.7 5 0C15 1.200 16 3 16.400 5.800c1.100.8 2.500 1.200 4.300 1-1.500 2.300-5 3.200-9.700 3.200S2.800 9.100 1.300 6.800z" fill="#606060"/><path d="M6.700 10.400a4.300 4.300 0 0 0 8.600 0z" fill="#606060"/><path d="M2.700 23.500v-1.300c0-3.200 3.700-5 8.300-5s8.300 1.800 8.300 5v1.300z" fill="none" stroke="#606060" stroke-width="1.800" stroke-linejoin="round"/></svg>
 </div>
 <div class="sh" style="top:72px;letter-spacing:0.26px">HOME</div>
 <svg class="ic" style="top:101px" viewBox="0 0 16 16" fill="none" stroke="#727781" stroke-width="1.35" stroke-linecap="round" stroke-linejoin="round"><path d="M2.500 7.200L8 2.500l5.500 4.700V13.500H10V9.500H6v4H2.500z"/></svg>
 <div class="si" style="top:101px;letter-spacing:0.9px">Home</div>
 <svg class="ic" style="top:134px" viewBox="0 0 16 16" fill="none" stroke="#727781" stroke-width="1.35" stroke-linecap="round" stroke-linejoin="round"><rect x="3.800" y="3.300" width="8.400" height="11.200" rx="1.300"/><path d="M6.500 3.300v-1.800h3v1.800M6.800 8.300a1.200 1.200 0 1 0 2.400 0 1.200 1.200 0 1 0-2.400 0M6 11.800c.4-1 3.600-1 4 0"/></svg>
 <div class="si" style="top:134px;letter-spacing:0.58px">Accréditations</div>
 <svg class="ic" style="top:166.50px;left:13px;width:18px;height:18px" viewBox="0 0 16 16" fill="none" stroke="#727781" stroke-width="1.35" stroke-linecap="round" stroke-linejoin="round"><path d="M1.500 4.500v-3h3M11.500 1.500h3v3M14.500 11.500v3h-3M4.500 14.500h-3v-3"/><rect x="4.300" y="4.300" width="3" height="3"/><rect x="8.800" y="4.300" width="3" height="3"/><rect x="4.300" y="8.800" width="3" height="3"/><path d="M9 9h1v1H9zM11 11h1v1h-1z"/></svg>
 <div class="si" style="top:167px;letter-spacing:0.35px">Scanner</div>
 <div class="sh" style="top:205px">VACATIONS</div>
 <svg class="ic" style="top:234px" viewBox="0 0 16 16" fill="none" stroke="#727781" stroke-width="1.35" stroke-linecap="round" stroke-linejoin="round"><path d="M13 7V4a1 1 0 0 0-1-1H3a1 1 0 0 0-1 1v8.500a1 1 0 0 0 1 1h4M2 6.200h11M5 1.500v2.500M10 1.500v2.500"/><circle cx="11.200" cy="11.200" r="3.300"/><path d="M11.200 9.500v1.900l1.200.8"/></svg>
 <div class="si" style="top:234px;letter-spacing:0.44px">Vacations ouvertes</div>
 <svg class="ic" style="top:267.5px" viewBox="0 0 16 16" fill="none" stroke="#727781" stroke-width="1.35" stroke-linecap="round" stroke-linejoin="round"><rect x="4" y="3" width="10.500" height="9.500" rx="1"/><path d="M4 5.800h10.500M7 1.500v2.500M11.500 1.500v2.500M7.300 9l1.500 1.400 2.700-2.800M1.500 5.500v8a1 1 0 0 0 1 1h9"/></svg>
 <div class="si" style="top:267.5px;letter-spacing:0.37px">Vacations validées</div>
 <svg class="ic" style="top:301px" viewBox="0 0 16 16" fill="none" stroke="#727781" stroke-width="1.35" stroke-linecap="round" stroke-linejoin="round"><rect x="4" y="3" width="10.500" height="9.500" rx="1"/><path d="M4 5.800h10.500M7 1.500v2.500M11.500 1.500v2.500M1.500 5.500v8a1 1 0 0 0 1 1h9"/><rect x="9.500" y="8" width="2.500" height="2.200" fill="#8d929c"/></svg>
 <div class="si" style="top:301px;letter-spacing:0.34px">Toutes les vacations</div>
 <div class="sh" style="top:338.5px">ÉVÉNEMENTS</div>
 <svg class="ic" style="top:367.5px" viewBox="0 0 16 16" fill="none" stroke="#727781" stroke-width="1.35" stroke-linecap="round" stroke-linejoin="round"><rect x="2" y="3" width="12" height="11" rx="1.200"/><path d="M2 6.200h12M5 1.500v2.500M11 1.500v2.500M8 8v4M6 10h4"/></svg>
 <div class="si" style="top:367.5px;letter-spacing:0.53px">Créer un événement</div>
 <svg class="ic" style="top:401px" viewBox="0 0 16 16" fill="none" stroke="#727781" stroke-width="1.35" stroke-linecap="round" stroke-linejoin="round"><rect x="2" y="3" width="12" height="11" rx="1.200"/><path d="M2 6.200h12M5 1.500v2.500M11 1.500v2.500"/><rect x="4.500" y="8.500" width="2.500" height="2.500" fill="#8d929c"/></svg>
 <div class="si" style="top:401px;letter-spacing:0.45px">Liste des événements</div>
 <div class="sh" style="top:439px;letter-spacing:-0.25px">ENTITÉS</div>
 <svg class="ic" style="top:468px" viewBox="0 0 16 16" fill="none" stroke="#727781" stroke-width="1.35" stroke-linecap="round" stroke-linejoin="round"><path d="M12 6.500V2.500a1 1 0 0 0-1-1H3a1 1 0 0 0-1 1v11a1 1 0 0 0 1 1h4.500"/><path d="M4.500 4.200h.1M7 4.200h.1M9.500 4.200h.1M4.500 6.700h.1M7 6.700h.1M9.500 6.700h.1M4.500 9.200h.1M7 9.200h.1M4.500 11.700h.1" stroke-width="1.500"/><circle cx="11.700" cy="11.700" r="1.600"/><path d="M11.700 8.800v1.300M11.700 13.300v1.300M8.800 11.700h1.300M13.300 11.700h1.300M9.700 9.700l.9.900M12.800 12.800l.9.900M13.700 9.700l-.9.900M9.700 13.700l.9-.9" stroke-width="1.100"/></svg>
 <div class="si" style="top:468px;letter-spacing:0.44px">Load It Up</div>
 <div class="sh" style="top:505px">LOADITUP</div>
 <svg class="ic" style="top:534px" viewBox="0 0 16 16" fill="none" stroke="#6f2c3b" stroke-width="1.15" stroke-linecap="round" stroke-linejoin="round"><path d="M8 1.500l5.500 1.800v4.200c0 3.200-2.300 5.800-5.500 7-3.200-1.200-5.500-3.800-5.500-7V3.300z"/><path d="M5.500 6h5v3.300h-5zM7 9.300v1.200h2V9.300"/></svg>
 <div class="si" style="top:534px;letter-spacing:0.72px">Administration</div>
 <svg class="ic" style="top:567.5px" viewBox="0 0 16 16" fill="none" stroke="#6c6a40" stroke-width="1.15" stroke-linecap="round" stroke-linejoin="round"><rect x="1.500" y="2.500" width="13" height="9.500" rx="1"/><path d="M5.500 14.200h5M4 5.300h3.500v3.200H4zM9.500 5.300H12M9.500 7h2.500M4 10h8"/></svg>
 <div class="si" style="top:567.5px;letter-spacing:0.85px">Documentation</div>
 <svg class="ic" style="top:601px" viewBox="0 0 16 16" fill="none" stroke="#3d6a50" stroke-width="1" stroke-linecap="round" stroke-linejoin="round"><path d="M2.500 13.500C2.500 7 6 3.500 14 2.500c0 7-3.500 10.500-9.500 10.500z" fill="#3d6a50" stroke="#3d6a50"/><path d="M2 14.500C4 10 7 7 11 5" stroke="#1e222b" stroke-width="1"/></svg>
 <div class="si" style="top:601px;letter-spacing:0.43px">Empreinte environn...</div>
 <svg class="ic" style="top:634px" viewBox="0 0 16 16" fill="none" stroke="#727781" stroke-width="1.35" stroke-linecap="round" stroke-linejoin="round"><path d="M1.500 12.500l4-4.500 2.800 2.700L14.500 4.500M4.500 2v2.600M3.200 3.300h2.600M9.500 1.500v2M8.500 2.500h2M13 7.500v1.600M12.200 8.300h1.600"/></svg>
 <div class="si" style="top:634px;letter-spacing:0.37px">Notes de version</div>
 <svg class="ic" style="top:667.5px" viewBox="0 0 16 16" fill="none" stroke="#727781" stroke-width="1.35" stroke-linecap="round" stroke-linejoin="round"><path d="M3 9.500a5 5 0 0 1 10 0M2.500 9h11v3.500a1 1 0 0 1-1 1h-9a1 1 0 0 1-1-1zM6 11h.1M10 11h.1" /><path d="M6 13.500v1.500h4v-1.500"/></svg>
 <div class="si" style="top:667.5px;letter-spacing:0.46px">Contact</div>
 <div class="abs" style="left:22px;top:127px;width:25px;height:16px;border-radius:8px;background:#5b4fc2;color:#e8e4ff;font-size:9.50px;line-height:16px;text-align:center">99+</div>
</div>

<!-- chrome -->
<div id="tabbar">
 <div class="tl" style="left:16px;background:#fe5f57"></div>
 <div class="tl" style="left:32px;background:#febc2e"></div>
 <div class="tl" style="left:48px;background:#28c840"></div>
 <div id="tab">
  <svg class="abs" style="left:6.5px;top:4.5px" width="12" height="14" viewBox="0 0 12 14"><rect x="0" y="1" width="2.2" height="5.2" fill="#1d3f8f"/><rect x="2.8" y="1" width="4.2" height="2" fill="#1d3f8f"/><rect x="3.9" y="1" width="2" height="5.2" fill="#1d3f8f"/><path d="M1 7.2v3.2a1.700 1.700 0 0 0 3.400 0V7.200" stroke="#1d3f8f" stroke-width="2" fill="none"/><path d="M6.300 7.200v5.300M6.300 8h1a1.200 1.200 0 0 1 0 2.500h-1" stroke="#1d3f8f" stroke-width="1.500" fill="none"/><path d="M9.200 0l2.800 3.600h-1.900v4.200c0 2-1 3-3 3v-1.500c1 0 1.400-.5 1.400-1.500V3.600H6.600z" fill="#1a73e8"/></svg>
  <div id="tabtitle">Amy Winehouse - Vacations - Load It Up</div>
  <svg class="abs" style="left:166px;top:5.50px" width="10" height="10" viewBox="0 0 10 10"><path d="M1.5 1.5l7 7M8.500 1.500l-7 7" stroke="#e3e3e3" stroke-width="1.3" fill="none"/></svg>
 </div>
 <svg class="abs" style="left:269px;top:10.20px" width="11" height="11" viewBox="0 0 11 11"><path d="M5.500 .5v10M.5 5.500h10" stroke="#e3e3e3" stroke-width="1.4" fill="none"/></svg>
 <div class="abs" style="left:1173px;top:5px;width:22px;height:22px;border-radius:7px;background:#3c3c3c"></div>
 <svg class="abs" style="left:1179px;top:12px" width="10" height="8" viewBox="0 0 10 8"><path d="M1.500 2l3.500 3.500L8.500 2" stroke="#fff" stroke-width="1.5" fill="none"/></svg>
</div>
<div id="toolbar">
 <svg class="abs" style="left:11px;top:12px" width="13" height="12" viewBox="0 0 13 12"><path d="M6.500 1L1.500 6l5 5M1.500 6h10.500" stroke="#dedede" stroke-width="1.4" fill="none"/></svg>
 <svg class="abs" style="left:39px;top:12px" width="13" height="12" viewBox="0 0 13 12"><path d="M6.500 1l5 5-5 5M11.500 6H1" stroke="#8a8a8a" stroke-width="1.4" fill="none"/></svg>
 <svg class="abs" style="left:68px;top:11px" width="13" height="13" viewBox="0 0 13 13"><path d="M11 6.500A4.500 4.500 0 1 1 9.700 3.300" stroke="#dedede" stroke-width="1.4" fill="none"/><path d="M11.300 1v3.600H7.700z" fill="#dedede"/></svg>
 <div id="urlpill">
  <div id="urlicon"></div>
  <svg class="abs" style="left:8px;top:8px" width="12" height="12" viewBox="0 0 12 12"><circle cx="2.500" cy="3" r="1.500" stroke="#e3e3e3" stroke-width="1.100" fill="none"/><path d="M5.800 3H11M1 9h5.200" stroke="#e3e3e3" stroke-width="1.200"/><circle cx="9.500" cy="9" r="1.500" stroke="#e3e3e3" stroke-width="1.100" fill="none"/></svg>
  <div id="url"><b>loaditup.app</b>/events/e499e62a-6894-49a0-a5d1-8261bdc72ce0/vacations</div>
  <svg class="abs" style="left:938px;top:6px" width="15" height="15" viewBox="0 0 24 24"><path d="M12 3.500l2.600 5.600 6.100.7-4.500 4.200 1.200 6-5.400-3-5.400 3 1.200-6L3.300 9.800l6.100-.7z" stroke="#e3e3e3" stroke-width="2" fill="none" stroke-linejoin="round"/></svg>
 </div>
 <svg class="abs" style="left:1075px;top:10px" width="16" height="16" viewBox="0 0 16 16"><path d="M6 3.200a1.600 1.600 0 0 1 3.200 0v.3h3v3.200h.4a1.500 1.500 0 0 1 0 3h-.4v3.800H2.500v-3.400h.3a1.400 1.400 0 0 0 0-2.800h-.3V3.500H6z" stroke="#e3e3e3" stroke-width="1.400" fill="none" stroke-linejoin="round"/></svg>
 <div class="abs" style="left:1103px;top:12px;width:1px;height:12px;background:#6a6a6a"></div>
 <svg class="abs" style="left:1120px;top:11.5px" width="13.5" height="11.7" viewBox="0 0 15 13"><path d="M0 2h9M0 5h9M0 8h5.500" stroke="#e3e3e3" stroke-width="1.300"/><path d="M10.800 9.500V1.700h3.400" stroke="#e3e3e3" stroke-width="1.400" fill="none"/><circle cx="9.300" cy="9.600" r="1.900" fill="#e3e3e3"/></svg>
 <div class="abs" style="left:1145px;top:10px;width:17px;height:17px;border-radius:50%;background:#4a2cc0;color:#d9cffc;font-size:9.5px;font-weight:bold;text-align:center;line-height:17px">C</div>
 <div class="abs" style="left:1181px;top:12px;width:3px;height:3px;border-radius:50%;background:#e3e3e3;box-shadow:0 4.50px 0 #e3e3e3,0 9px 0 #e3e3e3"></div>
</div>

</div>
</body>
</html>
